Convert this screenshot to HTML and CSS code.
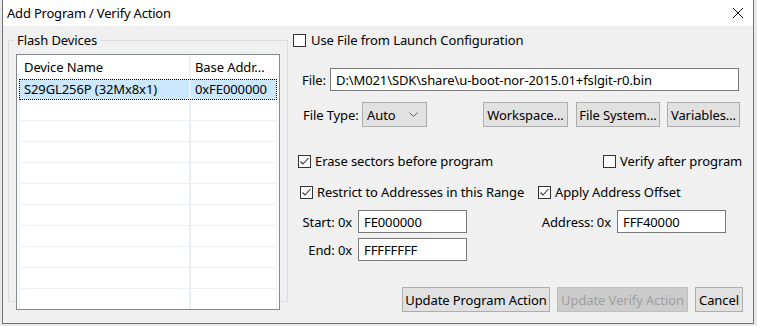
FILE: index.html
```html
<!DOCTYPE html>
<html lang="en">
<head>
    <meta charset="UTF-8">
    <title>Add Program / Verify Action</title>
    <link rel="stylesheet" href="styles.css">
</head>
<body>
    <div class="dialog">
        <div class="titlebar">
            <span class="title">Add Program / Verify Action</span>
            <svg class="close" width="12" height="12" viewBox="0 0 12 12">
                <path d="M1 1L11 11M11 1L1 11" stroke="#111" stroke-width="1" fill="none"/>
            </svg>
        </div>

        <div class="client">
            <fieldset class="group">
                <legend>Flash Devices</legend>
                <div class="list">
                    <div class="list-head">
                        <div class="cell col1">Device Name</div>
                        <div class="cell col2">Base Addr...</div>
                    </div>
                    <div class="list-row selected">
                        <div class="cell col1">S29GL256P (32Mx8x1)</div>
                        <div class="cell col2">0xFE000000</div>
                    </div>
                    <div class="list-row"><div class="cell col1"></div><div class="cell col2"></div></div>
                    <div class="list-row"><div class="cell col1"></div><div class="cell col2"></div></div>
                    <div class="list-row"><div class="cell col1"></div><div class="cell col2"></div></div>
                    <div class="list-row"><div class="cell col1"></div><div class="cell col2"></div></div>
                    <div class="list-row"><div class="cell col1"></div><div class="cell col2"></div></div>
                    <div class="list-row"><div class="cell col1"></div><div class="cell col2"></div></div>
                    <div class="list-row"><div class="cell col1"></div><div class="cell col2"></div></div>
                    <div class="list-row"><div class="cell col1"></div><div class="cell col2"></div></div>
                    <div class="list-row"><div class="cell col1"></div><div class="cell col2"></div></div>
                    <div class="list-row"><div class="cell col1"></div><div class="cell col2"></div></div>
                </div>
            </fieldset>

            <div class="pane">
                <label class="check row-usefile">
                    <span class="box"></span>
                    <span>Use File from Launch Configuration</span>
                </label>

                <div class="row row-file">
                    <span class="lbl-file">File:</span>
                    <div class="input file-input">D:\M021\SDK\share\u-boot-nor-2015.01+fslgit-r0.bin</div>
                </div>

                <div class="row row-type">
                    <span class="lbl-type">File Type:</span>
                    <div class="select">
                        <span>Auto</span>
                        <svg width="9" height="6" viewBox="0 0 9 6">
                            <path d="M0.5 0.5L4.5 4.5L8.5 0.5" stroke="#606060" stroke-width="1" fill="none"/>
                        </svg>
                    </div>
                    <button class="btn btn-ws">Workspace...</button>
                    <button class="btn btn-fs">File System...</button>
                    <button class="btn btn-var">Variables...</button>
                </div>

                <div class="row row-erase">
                    <label class="check check-erase">
                        <span class="box"><svg width="11" height="11" viewBox="0 0 11 11"><path d="M1.5 5.5L4 8L9.5 2" stroke="#333" stroke-width="1.1" fill="none"/></svg></span>
                        <span>Erase sectors before program</span>
                    </label>
                    <label class="check">
                        <span class="box"></span>
                        <span>Verify after program</span>
                    </label>
                </div>

                <div class="row row-restrict">
                    <label class="check check-restrict">
                        <span class="box"><svg width="11" height="11" viewBox="0 0 11 11"><path d="M1.5 5.5L4 8L9.5 2" stroke="#333" stroke-width="1.1" fill="none"/></svg></span>
                        <span>Restrict to Addresses in this Range</span>
                    </label>
                    <label class="check">
                        <span class="box"><svg width="11" height="11" viewBox="0 0 11 11"><path d="M1.5 5.5L4 8L9.5 2" stroke="#333" stroke-width="1.1" fill="none"/></svg></span>
                        <span>Apply Address Offset</span>
                    </label>
                </div>

                <div class="row row-start">
                    <span class="lbl-range">Start: 0x</span>
                    <div class="input addr-input">FE000000</div>
                    <span class="lbl-offset">Address: 0x</span>
                    <div class="input addr-input">FFF40000</div>
                </div>

                <div class="row row-end">
                    <span class="lbl-range">End: 0x</span>
                    <div class="input addr-input">FFFFFFFF</div>
                </div>

                <div class="row row-actions">
                    <button class="btn btn-program">Update Program Action</button>
                    <button class="btn btn-verify" disabled>Update Verify Action</button>
                    <button class="btn btn-cancel">Cancel</button>
                </div>
            </div>
        </div>
    </div>
</body>
</html>
```

FILE: styles.css
```css
body {
    margin: 0;
    background: #e9e9e9;
    font-family: "Noto Sans", "Liberation Sans", sans-serif;
    font-size: 13px;
    letter-spacing: -0.1px;
    color: #000;
    overflow: hidden;
}

.dialog {
    margin-left: 2px;
    width: 750px;
    height: 323px;
    background: #f0f0f0;
    border: 1px solid #707070;
    border-top: none;
}

.titlebar {
    height: 26px;
    background: #fff;
    display: flex;
    align-items: center;
    padding-left: 4px;
}

.title {
    flex: 1;
    letter-spacing: -0.2px;
}

.close {
    margin-right: 9px;
    margin-top: -1px;
}

.client {
    display: flex;
    padding: 6px 0 0 5px;
}

/* left group box */
.group {
    margin: 0;
    width: 264px;
    height: 256px;
    padding: 6px 7px 6px 7px;
    border: 1px solid #dcdcdc;
    box-sizing: content-box;
}

.group legend {
    margin-left: -2px;
    padding: 0 3px;
    line-height: 16px;
}

.list {
    width: 258px;
    height: 254px;
    border: 1px solid #828790;
    background: #fff;
    padding: 0 2px;
    box-sizing: content-box;
    overflow: hidden;
}

.list-head,
.list-row {
    display: flex;
}

.list-head {
    height: 24px;
    align-items: center;
}

.list-row {
    height: 20px;
    border-bottom: 1px solid #eceff3;
}

.cell {
    height: 100%;
    display: flex;
    align-items: center;
    padding-left: 4px;
    box-sizing: border-box;
    white-space: nowrap;
    overflow: hidden;
}

.col1 {
    width: 172px;
    border-left: 1px solid #eceff3;
    border-right: 2px solid #eceff3;
}

.col2 {
    flex: 1;
    border-right: 1px solid #eceff3;
}

.list-head .cell {
    border-left-color: #fff;
    border-right-color: #f0f0f0;
}

.list-head .col2 {
    border-right-color: #fff;
}

.list-row.selected {
    outline: 1px dotted #000;
    outline-offset: -1px;
}

.list-row.selected .cell {
    background: #cce8ff;
}

.list-row.selected .col1 {
    border-left-color: #cce8ff;
}

/* right pane */
.pane {
    margin-left: 5px;
    width: 450px;
    display: flex;
    flex-direction: column;
}

.row {
    display: flex;
    align-items: center;
}

.check {
    display: flex;
    align-items: center;
    height: 16px;
    white-space: nowrap;
}

.box {
    width: 11px;
    height: 11px;
    border: 1px solid #333;
    background: #fff;
    margin-right: 4px;
    display: flex;
}

.row-usefile .box {
    margin-right: 5px;
}

.input {
    height: 21px;
    border: 1px solid #7a7a7a;
    background: #fff;
    padding-left: 5px;
    display: flex;
    align-items: center;
    box-sizing: content-box;
    white-space: nowrap;
}

.row-file {
    margin-top: 20px;
    padding-left: 9px;
}

.lbl-file {
    width: 28px;
}

.file-input {
    width: 402px;
}

.row-type {
    margin-top: 11px;
    padding-left: 10px;
}

.lbl-type {
    width: 59px;
}

.select {
    width: 65px;
    height: 25px;
    border: 1px solid #adadad;
    background: #e1e1e1;
    display: flex;
    align-items: center;
    justify-content: space-between;
    padding: 0 8px 0 4px;
    box-sizing: border-box;
}

.btn {
    font: inherit;
    letter-spacing: inherit;
    height: 25px;
    border: 1px solid #adadad;
    background: #e1e1e1;
    color: #000;
    padding: 0;
    box-sizing: border-box;
    white-space: nowrap;
}

.btn-ws {
    width: 85px;
    margin-left: 56px;
}

.btn-fs {
    width: 84px;
    margin-left: 8px;
}

.btn-var {
    width: 73px;
    margin-left: 7px;
}

.row-erase {
    margin-top: 26px;
    padding-left: 5px;
}

.check-erase {
    width: 305px;
}

.row-restrict {
    margin-top: 15px;
    padding-left: 7px;
}

.check-restrict {
    width: 238px;
}

.row-start {
    margin-top: 10px;
}

.row-end {
    margin-top: 5px;
}

.lbl-range {
    width: 59px;
    text-align: right;
    margin-right: 6px;
}

.addr-input {
    width: 102px;
}

.lbl-offset {
    width: 144px;
    text-align: right;
    margin-right: 6px;
}

.row-actions {
    margin-top: 26px;
    justify-content: flex-end;
}

.btn-program {
    width: 148px;
}

.btn-verify {
    width: 131px;
    margin-left: 7px;
    background: #cccccc;
    border-color: #bfbfbf;
    color: #a0a0a0;
}

.btn-cancel {
    width: 48px;
    margin-left: 7px;
}
```
